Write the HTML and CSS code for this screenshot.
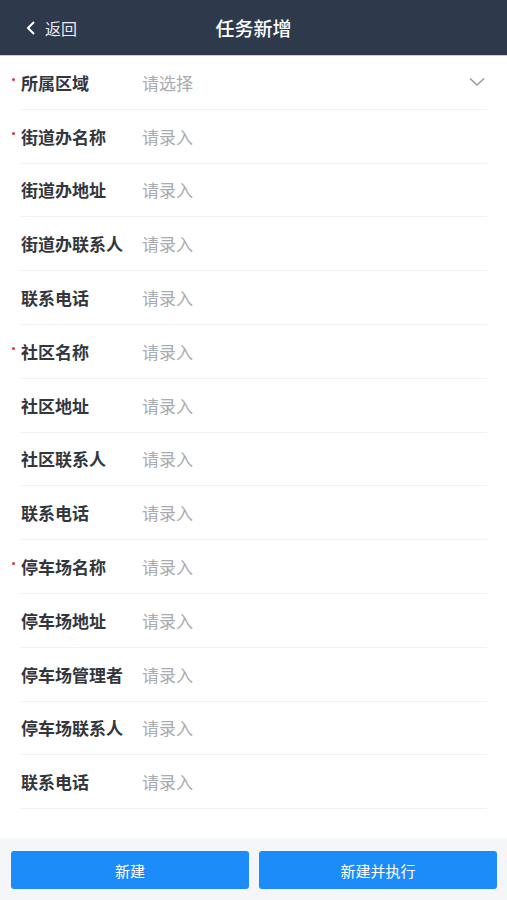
FILE: index.html
```html
<!DOCTYPE html>
<html lang="zh-CN">
<head>
    <meta charset="UTF-8">
    <title>任务新增</title>
    <link rel="stylesheet" href="styles.css">
</head>
<body>
<div class="page">
    <div class="nav">
        <div class="back">
            <svg width="12" height="16" viewBox="0 0 12 16"><path d="M9 2 L3 8 L9 14" fill="none" stroke="#fff" stroke-width="2"/></svg>
            <span>返回</span>
        </div>
        <div class="title">任务新增</div>
    </div>

    <div class="form">
        <div class="row">
            <div class="label req">所属区域</div>
            <div class="value">请选择</div>
            <svg class="arrow" width="16" height="10" viewBox="0 0 16 10"><path d="M1 1.5 L8 8 L15 1.5" fill="none" stroke="#999" stroke-width="1.5"/></svg>
        </div>
        <div class="row"><div class="label req">街道办名称</div><div class="value">请录入</div></div>
        <div class="row"><div class="label">街道办地址</div><div class="value">请录入</div></div>
        <div class="row"><div class="label">街道办联系人</div><div class="value">请录入</div></div>
        <div class="row"><div class="label">联系电话</div><div class="value">请录入</div></div>
        <div class="row"><div class="label req">社区名称</div><div class="value">请录入</div></div>
        <div class="row"><div class="label">社区地址</div><div class="value">请录入</div></div>
        <div class="row"><div class="label">社区联系人</div><div class="value">请录入</div></div>
        <div class="row"><div class="label">联系电话</div><div class="value">请录入</div></div>
        <div class="row"><div class="label req">停车场名称</div><div class="value">请录入</div></div>
        <div class="row"><div class="label">停车场地址</div><div class="value">请录入</div></div>
        <div class="row"><div class="label">停车场管理者</div><div class="value">请录入</div></div>
        <div class="row"><div class="label">停车场联系人</div><div class="value">请录入</div></div>
        <div class="row"><div class="label">联系电话</div><div class="value">请录入</div></div>
    </div>

    <div class="footer">
        <div class="btn">新建</div>
        <div class="btn">新建并执行</div>
    </div>
</div>
</body>
</html>
```

FILE: styles.css
```css
* {
    margin: 0;
    padding: 0;
    box-sizing: border-box;
}

body {
    font-family: "Noto Sans CJK SC", "Noto Sans", sans-serif;
    background: #fff;
}

.page {
    width: 507px;
    height: 900px;
    display: flex;
    flex-direction: column;
}

.nav {
    height: 56px;
    background: #2e3a4b;
    border-bottom: 1px solid #c9ced6;
    display: flex;
    align-items: center;
    justify-content: center;
    position: relative;
    color: #fff;
}

.nav .back {
    position: absolute;
    left: 25px;
    top: 0;
    height: 56px;
    display: flex;
    align-items: center;
    gap: 8px;
    font-size: 16px;
    color: #e8ebef;
}

.nav .title {
    font-size: 19px;
    font-weight: 500;
}

.form {
    padding: 0 20px 0 21px;
    flex: 1;
}

.row {
    height: 53.8px;
    display: flex;
    align-items: center;
    border-bottom: 1px solid #f0f1f3;
    position: relative;
}

.label {
    width: 121px;
    font-size: 17px;
    font-weight: bold;
    color: #33363c;
    position: relative;
}

.label.req::before {
    content: "";
    position: absolute;
    left: -9px;
    top: 8px;
    width: 3px;
    height: 3px;
    border-radius: 50%;
    background: #e8313f;
}

.value {
    flex: 1;
    font-size: 17px;
    color: #a8abb0;
}

.arrow {
    margin-right: 2px;
}

.footer {
    height: 62px;
    background: #f5f6f8;
    display: flex;
    gap: 10px;
    padding: 13px 10px 11px 11px;
}

.btn {
    flex: 1;
    background: #1b8cf8;
    border-radius: 3px;
    color: #fff;
    font-size: 15px;
    display: flex;
    align-items: center;
    justify-content: center;
}
```
